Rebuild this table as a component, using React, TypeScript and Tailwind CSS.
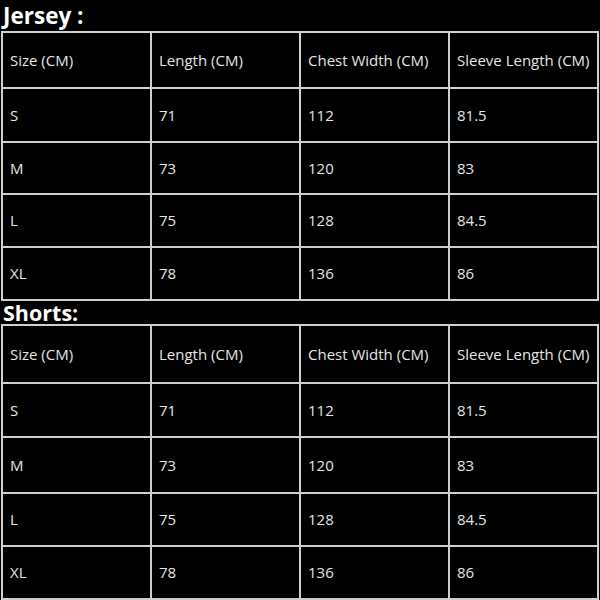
const headers = ["Size (CM)", "Length (CM)", "Chest Width (CM)", "Sleeve Length (CM)"];

const rows = [
  ["S", "71", "112", "81.5"],
  ["M", "73", "120", "83"],
  ["L", "75", "128", "84.5"],
  ["XL", "78", "136", "86"],
];

function SizeTable({ heights }: { heights: string[] }) {
  const all = [headers, ...rows];
  return (
    <table className="ml-px w-[598px] table-fixed border-collapse">
      <tbody>
        {all.map((r, i) => (
          <tr key={i} className={heights[i]}>
            {r.map((c, j) => (
              <td
                key={j}
                className="border-2 border-[#cfcfcf] pl-[7px] align-middle text-[15px] text-[#e4e4e4]"
              >
                {c}
              </td>
            ))}
          </tr>
        ))}
      </tbody>
    </table>
  );
}

export default function App() {
  return (
    <div
      className="h-[600px] w-[600px] overflow-hidden bg-black"
      style={{ fontFamily: '"Open Sans", "Liberation Sans", sans-serif' }}
    >
      <h2 className="h-[31px] pl-[3px] text-[22.5px] leading-[32px] font-bold text-white">
        Jersey :
      </h2>
      <SizeTable heights={["h-[56px]", "h-[54px]", "h-[52px]", "h-[53px]", "h-[53px]"]} />
      <h2 className="h-[23px] pl-[3px] text-[21.5px] leading-[23px] font-bold text-white">
        Shorts:
      </h2>
      <SizeTable heights={["h-[58px]", "h-[54px]", "h-[56px]", "h-[53px]", "h-[53px]"]} />
    </div>
  );
}
